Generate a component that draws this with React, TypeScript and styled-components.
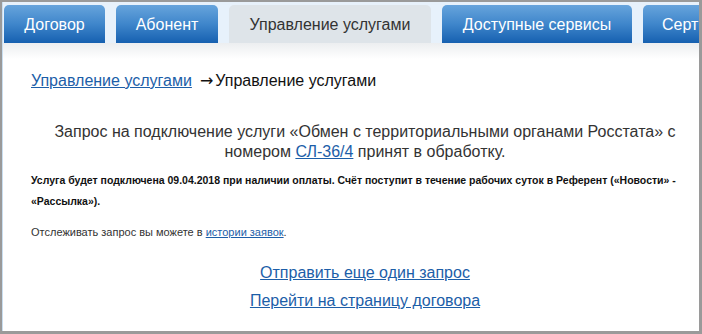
import React from "react";
import styled, { createGlobalStyle } from "styled-components";

const GlobalStyle = createGlobalStyle`
  html, body {
    margin: 0;
    padding: 0;
    background: #ffffff;
  }
  body {
    font-family: "Liberation Sans", Arial, sans-serif;
  }
`;

const Frame = styled.div`
  width: 702px;
  height: 334px;
  box-sizing: border-box;
  border-top: 2px solid #9a9a9a;
  border-left: 2px solid #9a9a9a;
  border-right: 3px solid #9a9a9a;
  border-bottom: 3px solid #9a9a9a;
  overflow: hidden;
  display: flex;
  flex-direction: column;
`;

const Inner = styled.div`
  flex: 1;
  border-left: 1px solid #c9def0;
  display: flex;
  flex-direction: column;
  min-height: 0;
`;

const TabStrip = styled.div`
  display: flex;
  gap: 11px;
  padding: 3px 0 0 1px;
  height: 41px;
  box-sizing: border-box;
  background: #e7f1fb;
  white-space: nowrap;
  overflow: hidden;
`;

const Tab = styled.div<{ $active?: boolean; $width: number }>`
  flex: none;
  width: ${(p) => p.$width}px;
  height: 38px;
  padding-top: 2px;
  box-sizing: border-box;
  border-radius: 5px 5px 0 0;
  display: flex;
  align-items: center;
  justify-content: center;
  font-size: 16px;
  color: ${(p) => (p.$active ? "#333333" : "#ffffff")};
  background: ${(p) =>
    p.$active
      ? "#dee4e9"
      : "linear-gradient(to bottom, #67a4dc 0%, #3f86cb 50%, #1660b0 100%)"};
`;

const Content = styled.div`
  flex: 1;
  background: linear-gradient(to bottom, #eceef0 0px, #ffffff 16px);
  padding: 28px 0 0 28px;
  color: #222222;
`;

const Breadcrumb = styled.div`
  font-size: 16px;
  line-height: 20px;
  color: #111111;
`;

const Link = styled.a`
  color: #1c5ea8;
  text-decoration: underline;
  cursor: pointer;
`;

const Arrow = styled.span`
  font-family: "DejaVu Sans", sans-serif;
  font-size: 16px;
  margin: 0 2px 0 8px;
`;

const Message = styled.p`
  margin: 31px 0 0 0;
  font-size: 16px;
  line-height: 20px;
  text-align: center;
  color: #333333;
`;

const Notice = styled.p`
  margin: 8px 0 0 0;
  font-size: 10.5px;
  font-weight: bold;
  line-height: 21px;
  color: #111111;
`;

const Hint = styled.p`
  margin: 13px 0 0 0;
  font-size: 11px;
  line-height: 14px;
  color: #333333;
`;

const Actions = styled.div`
  margin-top: 24px;
  display: flex;
  flex-direction: column;
  align-items: center;
  gap: 9px;
  font-size: 16px;
  line-height: 19px;
`;

const tabs = [
  { label: "Договор", width: 101 },
  { label: "Абонент", width: 102 },
  { label: "Управление услугами", width: 202, active: true },
  { label: "Доступные сервисы", width: 190 },
  { label: "Сертификаты", width: 140 },
];

export default function App() {
  return (
    <>
      <GlobalStyle />
      <Frame>
        <Inner>
          <TabStrip>
            {tabs.map((t) => (
              <Tab key={t.label} $width={t.width} $active={t.active}>
                {t.label}
              </Tab>
            ))}
          </TabStrip>
          <Content>
            <Breadcrumb>
              <Link>Управление услугами</Link>
              <Arrow>→</Arrow>Управление услугами
            </Breadcrumb>
            <Message>
              Запрос на подключение услуги «Обмен с территориальными органами
              Росстата» с номером <Link>СЛ-36/4</Link> принят в обработку.
            </Message>
            <Notice>
              Услуга будет подключена 09.04.2018 при наличии оплаты. Счёт
              поступит в течение рабочих суток в Референт («Новости» -
              «Рассылка»).
            </Notice>
            <Hint>
              Отслеживать запрос вы можете в <Link>истории заявок</Link>.
            </Hint>
            <Actions>
              <Link>Отправить еще один запрос</Link>
              <Link>Перейти на страницу договора</Link>
            </Actions>
          </Content>
        </Inner>
      </Frame>
    </>
  );
}
